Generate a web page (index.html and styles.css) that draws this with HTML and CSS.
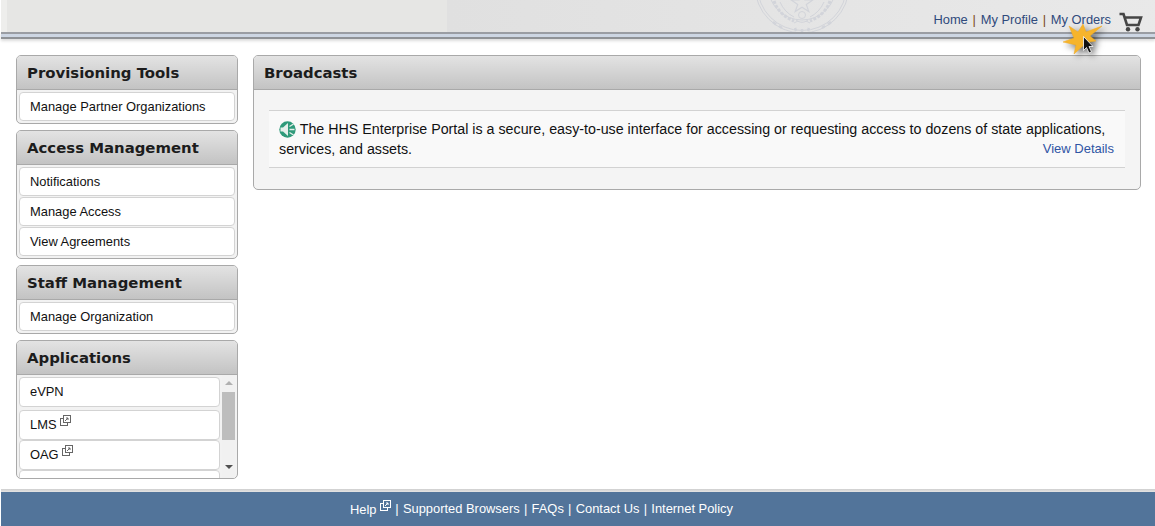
FILE: index.html
```html
<!DOCTYPE html>
<html lang="en">
<head>
<meta charset="utf-8">
<title>HHS Enterprise Portal</title>
<link rel="stylesheet" href="styles.css">
</head>
<body>
<div class="page">
  <header class="topbar">
    <div class="topbar-main">
      <svg class="seal" width="100" height="32" viewBox="0 0 100 32" fill="none" stroke="#d2d4da">
        <circle cx="50" cy="-14" r="47"/>
        <circle cx="50" cy="-14" r="44.500"/>
        <circle cx="50" cy="-14" r="34"/>
        <path d="M50 -8l2.800 8h8l-6.500 4.600 2.500 7-6.800-4.400-6.800 4.400 2.500-7-6.500-4.600h8z" stroke-width="1.200"/>
        <path d="M22 1c3 9 10 16 20 20M78 1c-3 9-10 16-20 20" stroke-width="3" stroke-dasharray="3 1.500"/>
        <path d="M28 2c3 7 8 12 14 15M72 2c-3 7-8 12-14 15"/>
        <circle cx="50" cy="15" r="3.500"/>
        <path d="M44 20c4 3 8 3 12 0M42 23l4-2M58 23l-4-2"/>
        <path d="M21 22l3 2.500M27 26l3 2M73 26l-3 2M79 22l-3 2.500M43 28l1 3M57 28l-1 3M50 29v3" stroke-width="2.500"/>
      </svg>
      <nav class="toplinks">
        <a>Home</a><span class="bar">|</span><a>My Profile</a><span class="bar">|</span><a>My Orders</a>
      </nav>
      <svg class="cart" width="24" height="20" viewBox="0 0 24 20" fill="none" stroke="#454545" stroke-width="2.600">
        <path d="M0.500 2h4l3.500 11h11.500l2.500-7.500H6"/>
        <circle cx="9" cy="17.300" r="2.200" fill="#454545" stroke="none"/>
        <circle cx="18.500" cy="17.300" r="2.200" fill="#454545" stroke="none"/>
      </svg>
    </div>
    <div class="topbar-stripe"></div>
  </header>

  <svg class="pointer" width="46" height="38" viewBox="0 0 46 38">
    <path d="M9 6l9 6 5-8 3 8 16-6-12 10 6 5-7 1 0 7-5-4-10 9 2-9-13-3 11-4z" fill="#f6b42c" stroke="#eea820" stroke-width=".5"/>
    <path d="M23.500 16.500v14l3-3 2.500 5.500 2.500-1-2.500-5.500h4z" fill="#111" stroke="#fff" stroke-width=".8"/>
  </svg>

  <main class="content">
    <aside class="sidebar">
      <section class="panel">
        <h2 class="panel-title">Provisioning Tools</h2>
        <div class="panel-list">
          <a class="item">Manage Partner Organizations</a>
        </div>
      </section>
      <section class="panel">
        <h2 class="panel-title">Access Management</h2>
        <div class="panel-list">
          <a class="item">Notifications</a>
          <a class="item">Manage Access</a>
          <a class="item">View Agreements</a>
        </div>
      </section>
      <section class="panel">
        <h2 class="panel-title">Staff Management</h2>
        <div class="panel-list">
          <a class="item">Manage Organization</a>
        </div>
      </section>
      <section class="panel panel-apps">
        <h2 class="panel-title">Applications</h2>
        <div class="apps-body">
          <div class="apps-list">
            <a class="item app">eVPN</a>
            <a class="item app">LMS <svg class="ext" width="11" height="11" viewBox="0 0 11 11" fill="none" stroke="#666"><rect x="0.500" y="3.500" width="7" height="7"/><rect x="3.500" y="0.500" width="7" height="7" fill="#fff"/><path d="M5 6l3-3M6 3h2v2"/></svg></a>
            <a class="item app">OAG <svg class="ext" width="11" height="11" viewBox="0 0 11 11" fill="none" stroke="#666"><rect x="0.500" y="3.500" width="7" height="7"/><rect x="3.500" y="0.500" width="7" height="7" fill="#fff"/><path d="M5 6l3-3M6 3h2v2"/></svg></a>
            <a class="item app"></a>
          </div>
          <div class="scrollbar">
            <span class="arrow-up"></span>
            <span class="thumb"></span>
            <span class="arrow-down"></span>
          </div>
        </div>
      </section>
    </aside>

    <section class="broadcasts">
      <h2 class="panel-title broadcasts-title">Broadcasts</h2>
      <div class="broadcasts-body">
        <div class="notice">
          <p class="notice-text"><svg class="speaker" width="17" height="17" viewBox="0 0 17 17"><circle cx="8.500" cy="8.500" r="8.200" fill="#2f9a7a"/><path d="M1.500 6.500h2.500l5-4.500v13l-5-4.500H1.500z" fill="#e6efeb"/><path d="M10.500 5.500l4-2.500M10.500 8.500h5M10.500 11.500l4 2.500" stroke="#e6efeb" stroke-width="1.300"/></svg> The HHS Enterprise Portal is a secure, easy-to-use interface for accessing or requesting access to dozens of state applications, services, and assets.<a class="details">View Details</a></p>
        </div>
      </div>
    </section>
  </main>

  <footer class="footer">
    <a class="help">Help <svg class="ext" width="11" height="11" viewBox="0 0 11 11" fill="none" stroke="#fff"><rect x="0.500" y="3.500" width="7" height="7"/><rect x="3.500" y="0.500" width="7" height="7" fill="#52749a"/><path d="M5 6l3-3M6 3h2v2"/></svg></a>
    <span>|</span><a>Supported Browsers</a><span>|</span><a>FAQs</a><span>|</span><a>Contact Us</a><span>|</span><a>Internet Policy</a>
  </footer>
</div>
</body>
</html>
```

FILE: styles.css
```css
* { box-sizing: border-box; }
html, body { margin: 0; height: 100%; }
body {
  background: #fff;
  font-family: "Liberation Sans", Arial, sans-serif;
  font-size: 13px;
  color: #111;
  overflow: hidden;
}
.page {
  position: relative;
  display: flex;
  flex-direction: column;
  height: 526px;
}

/* Top bar */
.topbar { margin-left: 1px; }
.topbar-main {
  position: relative;
  display: flex;
  justify-content: flex-end;
  align-items: center;
  gap: 8px;
  height: 32px;
  padding: 6px 12px 0 0;
  background: linear-gradient(90deg, #e6e6e4 0, #e6e6e4 440px, #e0e0e0 440px, #e9e9e9 1155px);
  border-left: 6px solid #eeeeec;
}
.seal { position: absolute; left: 745px; top: 0; }
.toplinks {
  display: flex;
  gap: 4.750px;
  color: #2f4a7c;
  font-size: 12.900px;
}
.bar { color: #7a4a14; }
.cart { margin-top: 3px; margin-bottom: -3px; }
.topbar-stripe {
  height: 7px;
  background: #cdd6e3;
  border-top: 2px solid #9a9da3;
  border-bottom: 2px solid #8f9296;
  box-shadow: 0 2px 3px rgba(0,0,0,.14);
}
.pointer {
  position: absolute;
  left: 1060px;
  top: 20px;
  filter: drop-shadow(3px 3px 3px rgba(0,0,0,.55));
}

/* Layout */
.content {
  flex: 1;
  display: flex;
  align-items: flex-start;
  gap: 15px;
  padding: 16px 14px 0 16px;
}
.sidebar {
  flex: 0 0 222px;
  display: flex;
  flex-direction: column;
  gap: 6px;
}

/* Panels */
.panel, .broadcasts {
  border: 1px solid #a9a9a9;
  border-radius: 5px;
  overflow: hidden;
}
.panel { background: #f2f2f2; }
.panel-title {
  margin: 0;
  height: 34px;
  padding: 1px 10px 0;
  font-family: "DejaVu Sans", sans-serif;
  font-size: 14.900px;
  font-weight: bold;
  line-height: 33px;
  color: #1c1c1c;
  background: linear-gradient(#e3e3e3, #c3c3c3);
  border-bottom: 1px solid #a9a9a9;
}
.panel-list {
  display: flex;
  flex-direction: column;
  gap: 1px;
  padding: 2px;
}
.item {
  display: block;
  height: 29px;
  padding: 0 10px;
  font-size: 12.900px;
  line-height: 27px;
  color: #111;
  background: #fff;
  border: 1px solid #d3d3d3;
  border-radius: 4px;
}
.panel-apps { height: 139px; }
.apps-body {
  display: flex;
  height: 104px;
  overflow: hidden;
}
.apps-list {
  flex: 1;
  display: flex;
  flex-direction: column;
  padding: 2px 2px 0;
  overflow: hidden;
}
.app { flex: 0 0 30px; }
.app:first-child { margin-bottom: 3px; }
.ext { vertical-align: 3px; }
.scrollbar {
  flex: 0 0 13px;
  display: flex;
  flex-direction: column;
  align-items: center;
  background: #f1f1f1;
  margin-right: 2px;
  padding-top: 6px;
}
.arrow-up {
  width: 0;
  height: 0;
  margin-bottom: 7px;
  border: 4px solid transparent;
  border-top: 0;
  border-bottom: 4px solid #b0b0b0;
}
.thumb { flex: 0 0 48px; width: 13px; background: #bdbdbd; }
.arrow-down {
  width: 0;
  height: 0;
  margin-top: 25px;
  border: 4px solid transparent;
  border-bottom: 0;
  border-top: 4px solid #505050;
}

/* Broadcasts */
.broadcasts { flex: 1; background: #f4f4f4; }
.broadcasts-body { padding: 20px 15px 21px 15px; }
.notice {
  padding: 8px 10px 0;
  height: 58px;
  background: #f9f9f9;
  border-top: 1px solid #d2d2d2;
  border-bottom: 1px solid #d2d2d2;
}
.notice-text { margin: 0; line-height: 20px; font-size: 14.250px; }
.speaker { vertical-align: -4px; }
.details {
  float: right;
  margin-right: 1px;
  color: #2f55a4;
  font-size: 13px;
}

/* Footer */
.footer {
  display: flex;
  justify-content: center;
  align-items: center;
  gap: 4.250px;
  height: 37px;
  margin-left: 1px;
  padding: 2px 73px 0 0;
  color: #fff;
  font-size: 12.900px;
  background: linear-gradient(#cfcfcf, #e4e4e4 3px, #52749a 3px);
}
```
